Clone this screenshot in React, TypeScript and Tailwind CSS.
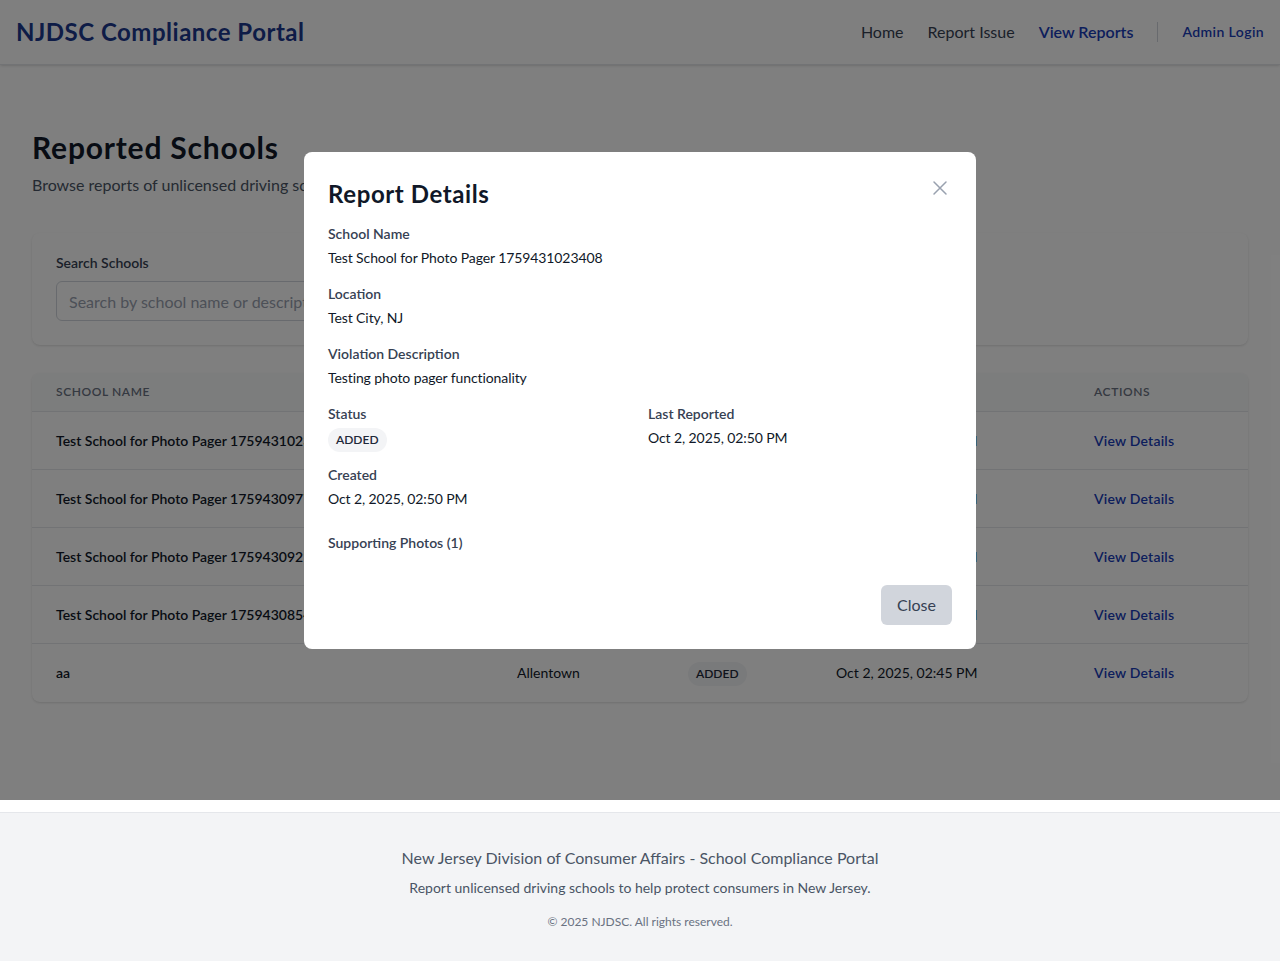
const rows = [
  { name: "Test School for Photo Pager 1759431023408", location: "Test City, NJ", date: "Oct 2, 2025, 02:50 PM" },
  { name: "Test School for Photo Pager 1759430977215", location: "Test City, NJ", date: "Oct 2, 2025, 02:49 PM" },
  { name: "Test School for Photo Pager 1759430921664", location: "Test City, NJ", date: "Oct 2, 2025, 02:48 PM" },
  { name: "Test School for Photo Pager 1759430854197", location: "Test City, NJ", date: "Oct 2, 2025, 02:47 PM" },
  { name: "aa", location: "Allentown", date: "Oct 2, 2025, 02:45 PM" },
];

function Badge() {
  return (
    <span className="inline-flex items-center rounded-full bg-gray-100 px-2 py-1 text-xs font-semibold leading-4 text-gray-800">
      ADDED
    </span>
  );
}

function Field({ label, value, className = "" }: { label: string; value: React.ReactNode; className?: string }) {
  return (
    <div className={className}>
      <div className="text-sm font-semibold leading-5 text-gray-700">{label}</div>
      <div className="mt-1 text-sm leading-5 tracking-[-0.1px] text-gray-900">{value}</div>
    </div>
  );
}

export default function App() {
  return (
    <div className="relative min-h-[962px] bg-white font-['Lato',sans-serif] text-gray-900">
      {/* Header */}
      <header className="flex h-[65px] items-center justify-between border-b border-gray-200 bg-white px-4 shadow-sm">
        <h1 className="text-2xl font-bold tracking-[0.5px] text-blue-900">NJDSC Compliance Portal</h1>
        <nav className="flex items-center gap-6">
          <a className="text-base text-gray-700">Home</a>
          <a className="text-base text-gray-700">Report Issue</a>
          <a className="text-base font-semibold text-blue-800">View Reports</a>
          <span className="h-5 border-l border-gray-300" />
          <a className="text-sm font-semibold tracking-[0.4px] text-blue-800">Admin Login</a>
        </nav>
      </header>

      {/* Main */}
      <main className="px-8 pt-16 pb-[110px]">
        <h2 className="text-3xl font-bold tracking-[0.8px] text-gray-900">Reported Schools</h2>
        <p className="mt-2 text-base text-gray-600">Browse reports of unlicensed driving schools in New Jersey</p>

        <div className="mt-9 rounded-lg bg-white px-6 pt-5 pb-6 shadow">
          <div className="grid grid-cols-3 gap-6">
            <div className="col-span-2">
              <label className="mb-2 block text-sm font-semibold leading-5 text-gray-700">Search Schools</label>
              <input
                placeholder="Search by school name or description..."
                className="h-10 w-full rounded-md border border-gray-300 px-3 text-base placeholder:text-gray-400"
              />
            </div>
            <div className="flex items-end">
              <span className="text-sm leading-5 text-gray-600">Showing 5 reports</span>
            </div>
          </div>
        </div>

        <div className="mt-7 overflow-hidden rounded-lg bg-white shadow">
          <table className="w-full table-fixed">
            <thead className="bg-gray-50">
              <tr className="border-b border-gray-200">
                <th className="w-[461px] px-6 py-[11px] text-left text-xs font-semibold uppercase leading-4 tracking-wider text-gray-500">School Name</th>
                <th className="w-[171px] px-6 py-[11px] text-left text-xs font-semibold uppercase leading-4 tracking-wider text-gray-500">Location</th>
                <th className="w-[148px] px-6 py-[11px] text-left text-xs font-semibold uppercase leading-4 tracking-wider text-gray-500">Status</th>
                <th className="w-[258px] px-6 py-[11px] text-left text-xs font-semibold uppercase leading-4 tracking-wider text-gray-500">Last Reported</th>
                <th className="px-6 py-[11px] text-left text-xs font-semibold uppercase leading-4 tracking-wider text-gray-500">Actions</th>
              </tr>
            </thead>
            <tbody className="divide-y divide-gray-200">
              {rows.map((r) => (
                <tr key={r.name} className="h-[58px]">
                  <td className="truncate whitespace-nowrap px-6 text-sm font-semibold text-gray-900">{r.name}</td>
                  <td className="whitespace-nowrap px-6 text-sm text-gray-900">{r.location}</td>
                  <td className="px-6"><Badge /></td>
                  <td className="whitespace-nowrap px-6 text-sm text-gray-900">{r.date}</td>
                  <td className="px-6 text-sm font-semibold tracking-[0.2px] text-blue-800">View Details</td>
                </tr>
              ))}
            </tbody>
          </table>
        </div>
      </main>

      {/* Footer */}
      <footer className="border-t border-gray-200 bg-gray-100 pt-[33px] pb-[31px] text-center">
        <p className="text-base text-gray-600">New Jersey Division of Consumer Affairs - School Compliance Portal</p>
        <p className="mt-2 text-sm text-gray-600">Report unlicensed driving schools to help protect consumers in New Jersey.</p>
        <p className="mt-4 text-xs text-gray-500">© 2025 NJDSC. All rights reserved.</p>
      </footer>

      {/* Modal overlay */}
      <div className="absolute inset-x-0 top-0 flex h-[800px] items-center justify-center bg-black/50">
        <div className="w-[672px] rounded-lg bg-white p-6">
          <div className="mb-[14px] flex items-start justify-between">
            <h3 className="mt-0.5 text-2xl font-bold tracking-[0.6px] text-gray-900">Report Details</h3>
            <button className="text-gray-400">
              <svg className="h-6 w-6" fill="none" viewBox="0 0 24 24" stroke="currentColor" strokeWidth={1.5}>
                <path strokeLinecap="round" strokeLinejoin="round" d="M6 18L18 6M6 6l12 12" />
              </svg>
            </button>
          </div>
          <div>
            <Field label="School Name" value="Test School for Photo Pager 1759431023408" />
            <Field className="mt-4" label="Location" value="Test City, NJ" />
            <Field className="mt-4" label="Violation Description" value="Testing photo pager functionality" />
            <div className="mt-4 grid grid-cols-2 gap-4">
              <div>
                <div className="text-sm font-semibold leading-5 text-gray-700">Status</div>
                <div className="mt-0.5">
                  <span className="inline-flex items-center rounded-full bg-gray-100 px-2 py-1 text-xs font-semibold leading-4 text-gray-800">ADDED</span>
                </div>
              </div>
              <Field label="Last Reported" value="Oct 2, 2025, 02:50 PM" />
            </div>
            <Field className="mt-[13px]" label="Created" value="Oct 2, 2025, 02:50 PM" />
            <div className="mt-6 text-sm font-semibold leading-5 text-gray-700">Supporting Photos (1)</div>
          </div>
          <div className="mt-8 flex justify-end">
            <button className="rounded-md bg-gray-300 px-4 py-2 text-base text-gray-700">Close</button>
          </div>
        </div>
      </div>
    </div>
  );
}
